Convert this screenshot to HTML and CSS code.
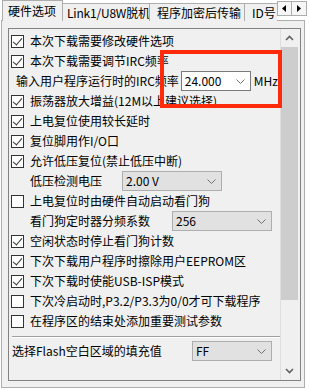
FILE: index.html
```html
<!doctype html>
<html lang="zh-CN">
<head>
	<meta charset="UTF-8">
	<title>硬件选项</title>
	<link rel="stylesheet" href="styles.css">
</head>
<body>
<div class="tabbar">
	<div class="tabs">
		<div class="tab on">硬件选项</div>
		<div class="tab t2">Link1/U8W脱机</div>
		<div class="tab t3">程序加密后传输</div>
		<div class="tab t4">ID号</div>
	</div>
	<div class="tabarrows">
		<span class="arr"><svg width="13" height="13"><polygon points="4,6.5 8,3 8,10" fill="#000"/></svg></span>
		<span class="arr"><svg width="13" height="13"><polygon points="9,6.5 5,3 5,10" fill="#000"/></svg></span>
	</div>
</div>
<div class="panel">
	<div class="frame">
		<div class="list">
			<div class="row"><span class="cb on"></span>本次下载需要修改硬件选项</div>
			<div class="row"><span class="cb on"></span>本次下载需要调节IRC频率</div>
			<div class="row irc">输入用户程序运行时的IRC频率
				<div class="combo white"><span>24.000</span><svg width="9" height="5"><polyline points="0.5,0.5 4.5,4.5 8.5,0.5" fill="none" stroke="#707070"/></svg></div>
				<span class="unit">MHz</span>
			</div>
			<div class="row"><span class="cb on"></span>振荡器放大增益(12M以上建议选择)</div>
			<div class="row"><span class="cb on"></span>上电复位使用较长延时</div>
			<div class="row"><span class="cb on"></span>复位脚用作I/O口</div>
			<div class="row"><span class="cb on"></span>允许低压复位(禁止低压中断)</div>
			<div class="row sub"><span class="lbl lv">低压检测电压</span>
				<div class="combo w100"><span>2.00 V</span><svg width="9" height="5"><polyline points="0.5,0.5 4.5,4.5 8.5,0.5" fill="none" stroke="#707070"/></svg></div>
			</div>
			<div class="row"><span class="cb"></span>上电复位时由硬件自动启动看门狗</div>
			<div class="row sub"><span class="lbl wd">看门狗定时器分频系数</span>
				<div class="combo w100"><span>256</span><svg width="9" height="5"><polyline points="0.5,0.5 4.5,4.5 8.5,0.5" fill="none" stroke="#707070"/></svg></div>
			</div>
			<div class="row"><span class="cb on"></span>空闲状态时停止看门狗计数</div>
			<div class="row"><span class="cb on"></span>下次下载用户程序时擦除用户EEPROM区</div>
			<div class="row"><span class="cb on"></span>下次下载时使能USB-ISP模式</div>
			<div class="row"><span class="cb"></span>下次冷启动时,P3.2/P3.3为0/0才可下载程序</div>
			<div class="row"><span class="cb"></span>在程序区的结束处添加重要测试参数</div>
			<div class="sep"></div>
			<div class="row fill"><span class="lbl ffl">选择Flash空白区域的填充值</span>
				<div class="combo w80"><span>FF</span><svg width="9" height="5"><polyline points="0.5,0.5 4.5,4.5 8.5,0.5" fill="none" stroke="#707070"/></svg></div>
			</div>
		</div>
		<div class="vscroll">
			<div class="sbtn"><svg width="9" height="6"><polyline points="1,5 4.5,1.5 8,5" fill="none" stroke="#606060" stroke-width="1.6"/></svg></div>
			<div class="thumb"></div>
			<div class="track"></div>
			<div class="sbtn"><svg width="9" height="6"><polyline points="1,1 4.5,4.5 8,1" fill="none" stroke="#606060" stroke-width="1.6"/></svg></div>
		</div>
	</div>
</div>
<div class="mark"></div>
</body>
</html>
```

FILE: styles.css
```css
*{box-sizing:border-box;}
body{margin:0;width:310px;height:390px;overflow:hidden;background:#fff;color:#000;font:12px/20px "Noto Sans CJK SC","Noto Sans",sans-serif;}

/* tab strip */
.tabbar{display:flex;align-items:flex-end;height:21px;margin-bottom:-1px;padding-left:2px;}
.tabs{display:flex;align-items:flex-end;width:275px;height:21px;overflow:hidden;}
.tab{flex:none;height:18px;line-height:17px;padding-left:5px;border:1px solid #adadad;border-left:0;border-bottom:0;background:#f0f0f0;white-space:nowrap;overflow:hidden;}
.tab.on{position:relative;z-index:2;height:21px;line-height:20px;width:61px;border-left:1px solid #adadad;}
.t2{width:87px;padding-left:4px;letter-spacing:-0.2px;}
.t3{width:95px;padding-left:7px;}
.t4{width:50px;padding-left:7px;}
.tabarrows{display:flex;align-self:flex-start;margin-top:1px;}
.arr{display:flex;width:15px;height:15px;border:1px solid #adadad;background:#f6f6f6;}
.arr+.arr{border-left:0;}

/* page */
.panel{width:304px;height:368px;margin-left:1px;padding:7px 3px 6px 6px;border:1px solid #adadad;background:#f0f0f0;}
.frame{display:flex;width:293px;height:353px;border:1px solid #828282;}
.list{flex:1;padding-top:2px;}
.row{display:flex;align-items:center;height:20px;padding-left:2px;white-space:nowrap;}
.row.irc{padding-left:7px;}
.row.sub{padding-left:21px;}
.row.fill{padding-left:3px;}
.cb{position:relative;flex:none;width:13px;height:13px;margin-right:6px;border:1px solid #333;background:#fff;}
.cb.on::after{content:"";position:absolute;left:3px;top:0;width:4px;height:8px;border:solid #333;border-width:0 1.2px 1.2px 0;transform:rotate(40deg);}
.lbl{flex:none;}
.lv{width:92px;}
.wd{width:142px;}
.ffl{width:180px;}

.combo{display:flex;align-items:center;justify-content:space-between;height:20px;padding:0 5px 0 3px;border:1px solid #adadad;background:#e1e1e1;line-height:18px;}
.combo.white{width:70px;margin-left:2px;border-color:#7a7a7a;background:#fff;}
.w100{width:100px;}
.w80{width:80px;}
.unit{margin-left:3px;}

.sep{height:2px;margin:5px 0 3px 3px;border-top:1px solid #a0a0a0;border-bottom:1px solid #fff;}

/* scrollbar */
.vscroll{display:flex;flex-direction:column;width:20px;border-left:1px solid #dedede;}
.sbtn{display:flex;align-items:center;justify-content:center;width:17px;height:18px;}
.thumb{width:17px;height:253px;background:#cdcdcd;}
.track{flex:1;}

/* highlight box */
.mark{position:absolute;left:160px;top:50px;width:122px;height:58px;border:4px solid #ff2a0a;}
```
